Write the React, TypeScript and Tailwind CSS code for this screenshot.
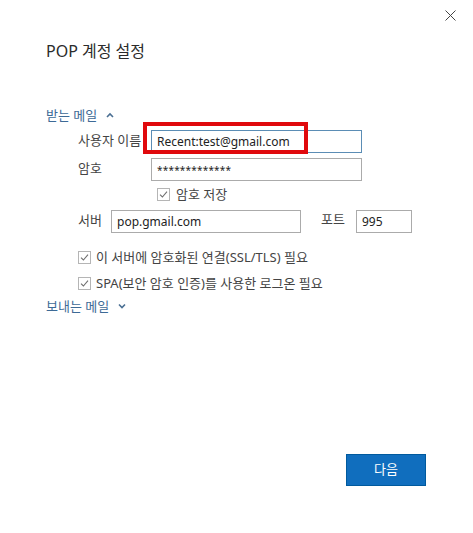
import React from 'react';

const font = { fontFamily: '"Noto Sans", "Noto Sans CJK KR", sans-serif' };

const CheckBox = () => (
  <span className="flex h-[13px] w-[13px] shrink-0 items-center justify-center border border-[#b5b5b5] bg-white">
    <svg width="9" height="9" viewBox="0 0 9 9" fill="none">
      <path d="M1 4.6 L3.4 7 L8 1.6" stroke="#6f6f6f" strokeWidth="1.1" />
    </svg>
  </span>
);

const Chevron = ({ up }: { up?: boolean }) => (
  <svg width="8" height="6" viewBox="0 0 8 6" fill="none">
    <path d={up ? 'M1 5 L4 2 L7 5' : 'M1 1.5 L4 4.5 L7 1.5'} stroke="#4a6f93" strokeWidth="1.6" />
  </svg>
);

const TextBox = ({
  value,
  width,
  blue,
  small,
}: {
  value: string;
  width: string;
  blue?: boolean;
  small?: boolean;
}) => (
  <div
    className={`flex h-[23px] ${width} items-center border bg-white px-[5px] text-[#222] ${
      small ? 'text-[10px] tracking-[0.2px]' : 'text-[12px]'
    } ${blue ? 'border-[#5b8db5]' : 'border-[#ababab]'}`}
  >
    {value}
  </div>
);

const App = () => {
  return (
    <div className="relative flex h-[533px] w-[473px] flex-col bg-white text-[#333]" style={font}>
      {/* close */}
      <button className="absolute left-[445px] top-[10px] h-[11px] w-[11px]">
        <svg width="11" height="11" viewBox="0 0 11 11" fill="none">
          <path d="M0.5 0.5 L10.5 10.5 M10.5 0.5 L0.5 10.5" stroke="#444" strokeWidth="1" />
        </svg>
      </button>

      <h1 className="pl-[46px] pt-[39px] text-[16px] font-normal leading-[24px] text-[#2b2b2b]">POP 계정 설정</h1>

      {/* incoming mail */}
      <div className="mt-[43px] pl-[46px]">
        <div className="flex items-center gap-[9px] text-[13px] leading-[18px] text-[#3d6a96]">
          <span>받는 메일</span>
          <Chevron up />
        </div>

        <div className="mt-[6px] flex flex-col pl-[32px] text-[13px] leading-[16px] text-[#444]">
          <div className="flex items-start">
            <span className="mt-[2px] w-[73px]">사용자 이름</span>
            <div className="relative">
              <TextBox value="Recent:test@gmail.com" width="w-[211px]" blue />
              <div className="absolute left-[-8px] top-[-8px] h-[32px] w-[165px] border-4 border-[#e0090d]" />
            </div>
          </div>

          <div className="mt-[5px] flex items-start">
            <span className="mt-[2px] w-[73px]">암호</span>
            <TextBox value="*************" width="w-[211px]" small />
          </div>

          <div className="ml-[79px] mt-[4px] flex h-[18px] items-center gap-[6px]">
            <CheckBox />
            <span>암호 저장</span>
          </div>

          <div className="mt-[7px] flex items-start">
            <span className="mt-[2px] w-[33px]">서버</span>
            <TextBox value="pop.gmail.com" width="w-[190px]" />
            <span className="ml-[20px] mt-[1px] w-[35px]">포트</span>
            <TextBox value="995" width="w-[56px]" />
          </div>

          <div className="mt-[15px] flex h-[18px] items-center gap-[5px]">
            <CheckBox />
            <span>이 서버에 암호화된 연결(SSL/TLS) 필요</span>
          </div>

          <div className="mt-[8px] flex h-[18px] items-center gap-[5px]">
            <CheckBox />
            <span>SPA(보안 암호 인증)를 사용한 로그온 필요</span>
          </div>
        </div>

        <div className="mt-[5px] flex items-center gap-[9px] text-[13px] leading-[18px] text-[#3d6a96]">
          <span>보내는 메일</span>
          <Chevron />
        </div>
      </div>

      {/* footer */}
      <div className="mt-auto flex justify-end pb-[47px] pr-[47px]">
        <button className="h-[32px] w-[80px] border border-[#005a9e] bg-[#106ebe] text-[13px] text-white">다음</button>
      </div>
    </div>
  );
};

export default App;
